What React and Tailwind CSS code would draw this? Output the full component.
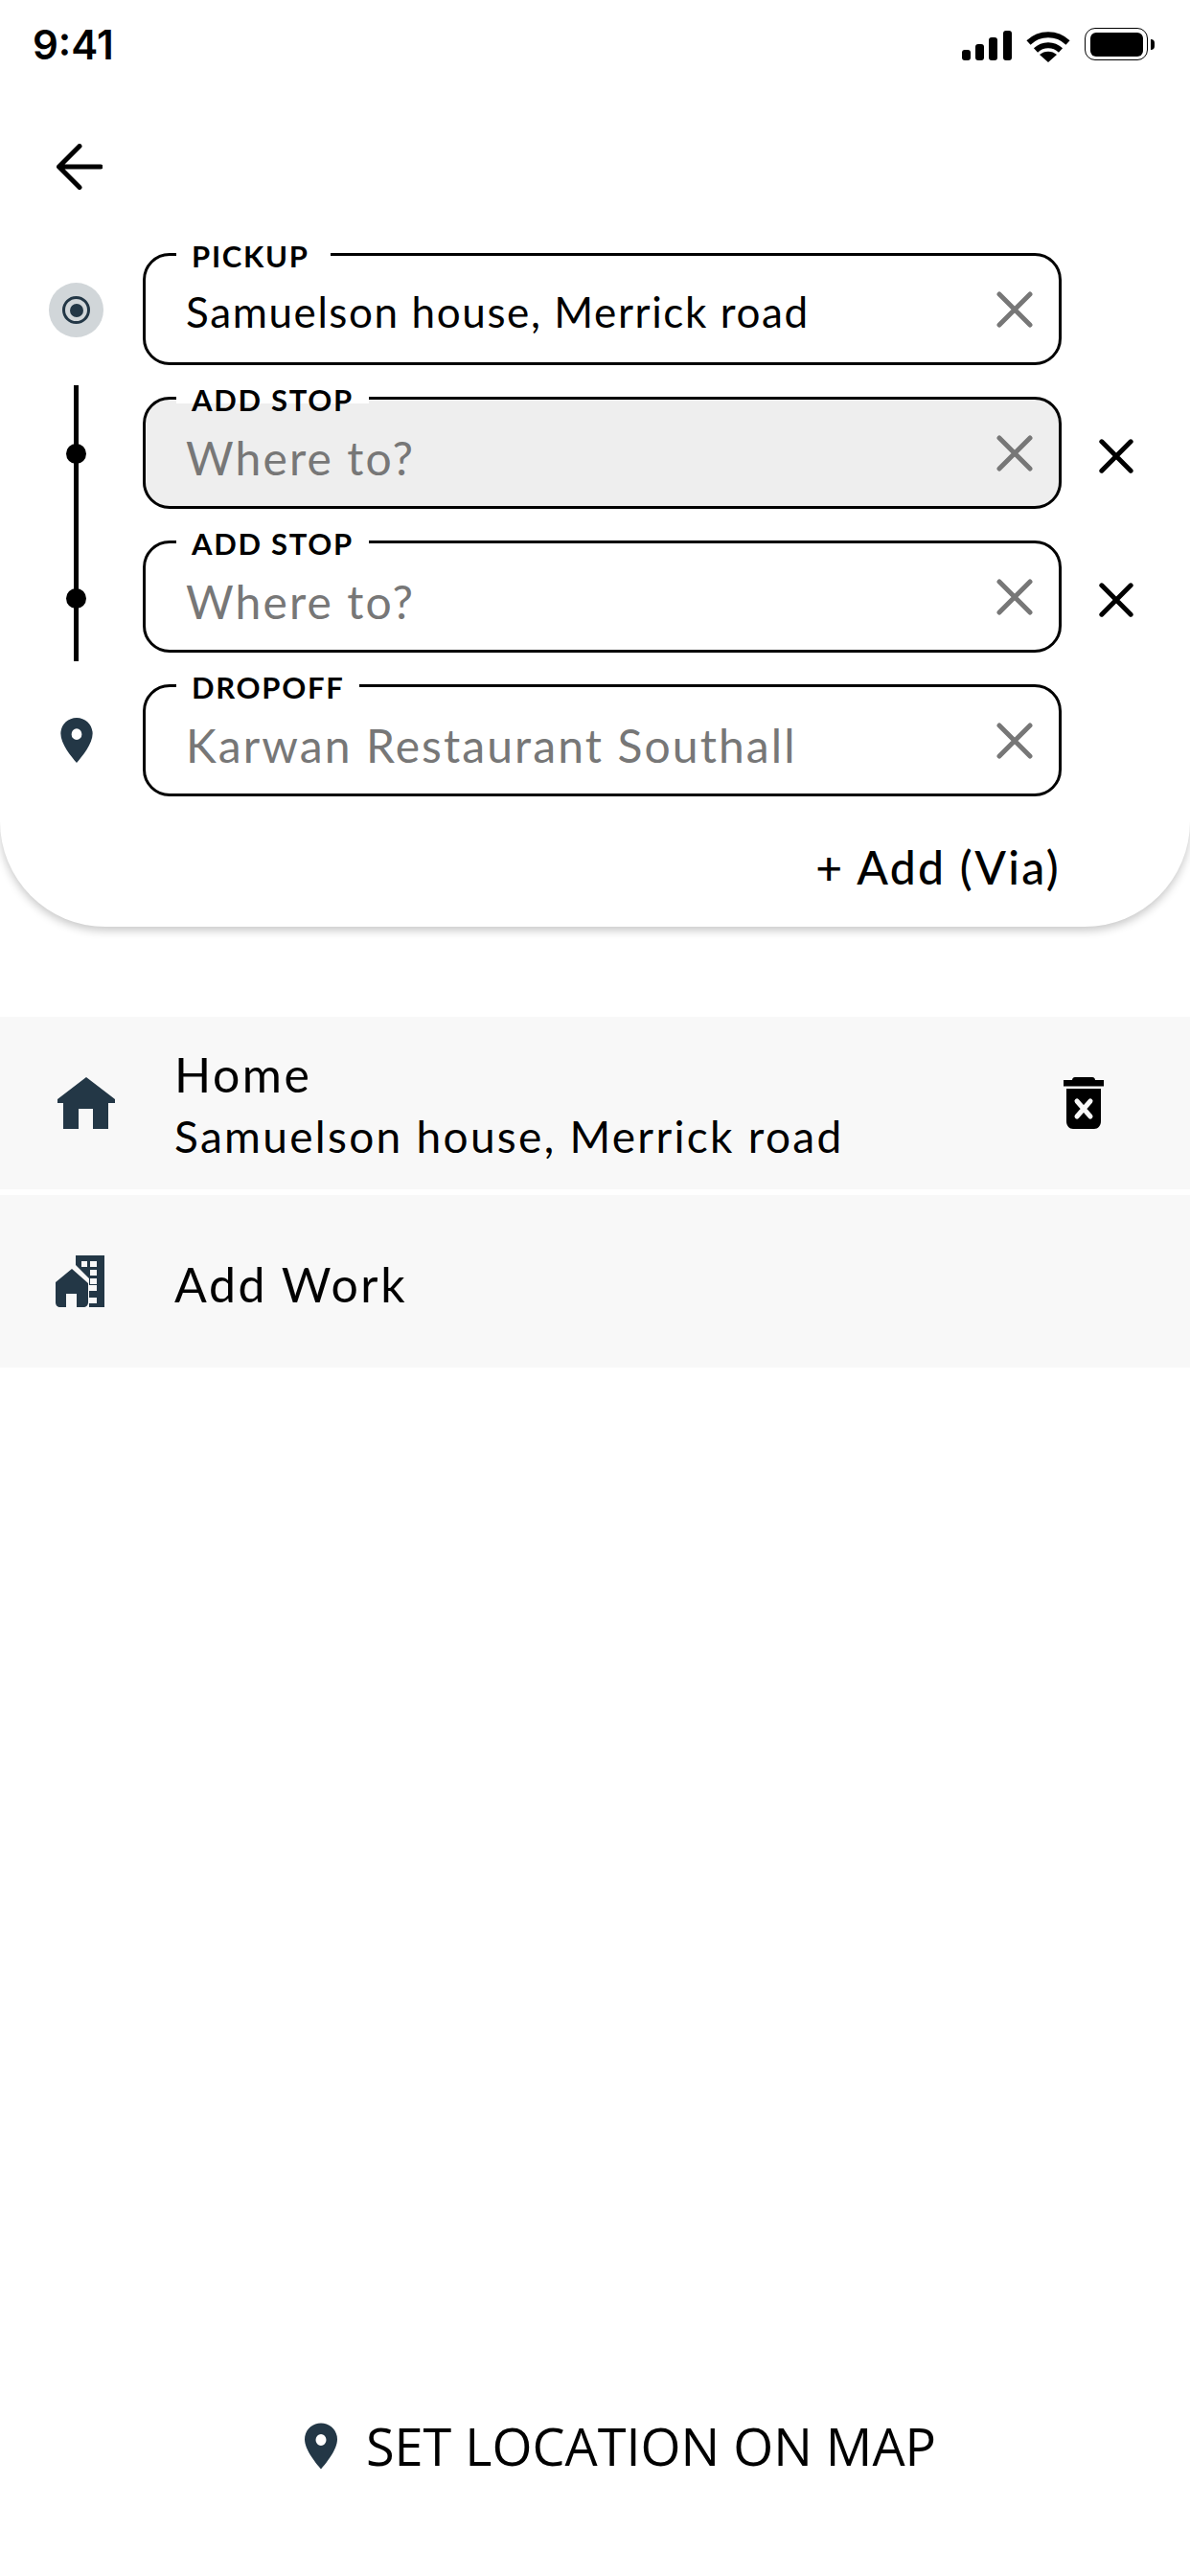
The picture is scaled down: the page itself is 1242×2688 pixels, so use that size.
const DARK = "#233746";

function Close({ color = "#777777", size = 38, sw = 5 }) {
  return (
    <svg width={size} height={size} viewBox="0 0 38 38" className="shrink-0">
      <path d="M3 3L35 35M35 3L3 35" stroke={color} strokeWidth={sw * 38 / size} strokeLinecap="round" />
    </svg>
  );
}

function Pin({ w, h }) {
  return (
    <svg width={w} height={h} viewBox="0 0 34 48" className="shrink-0">
      <path fillRule="evenodd" fill={DARK} d="M17 0C7.6 0 0 7.4 0 16.8 0 27.5 11 41 17 48c6-7 17-20.5 17-31.2C34 7.4 26.4 0 17 0Zm0 11.5a5.5 6 0 1 1 0 12 5.5 6 0 0 1 0-12Z" />
    </svg>
  );
}

function Field({ label, value, muted, filled, removable, labelW, first }) {
  return (
    <div className="flex items-center">
      <div className={`relative flex h-[117px] w-[959px] items-center justify-between rounded-[28px] border-[3px] border-black pl-[42px] pr-[27px] ${filled ? "bg-[#eeeeee]" : "bg-white"}`}>
        <div className={`absolute -top-[10px] left-[32px] h-[14px] bg-white pl-[16px] ${labelW}`}>
          <span className="block -translate-y-[8px] text-[31px] font-bold leading-[36px] tracking-[1.7px] text-black">{label}</span>
        </div>
        <span className={`${first ? "translate-y-[2px] text-[44px] tracking-[1.6px]" : "translate-y-[5px] text-[48px] tracking-[2.1px]"} leading-[52px] ${muted ? "text-[#777777]" : "text-black"}`}>{value}</span>
        <Close />
      </div>
      {removable && (
        <span className="ml-[39px] translate-y-[3px]"><Close color="#000000" size={36} sw={5} /></span>
      )}
    </div>
  );
}

function StatusIcons() {
  return (
    <div className="flex items-start">
      <svg width="52" height="31" viewBox="0 0 52 31" className="mt-[32px]" fill="#000">
        <rect x="0" y="20" width="9" height="11" rx="3" />
        <rect x="14" y="14" width="9" height="17" rx="3" />
        <rect x="28" y="7" width="9" height="24" rx="3" />
        <rect x="43" y="0" width="9" height="31" rx="3" />
      </svg>
      <svg width="46" height="33" viewBox="0 0 46 33" className="ml-[15px] mt-[32px]" fill="none" stroke="#000">
        <path d="M2.5 12.5C14 1.5 32 1.5 43.5 12.5" strokeWidth="6" />
        <path d="M10 20.5C17.5 13.5 28.5 13.5 36 20.5" strokeWidth="6" />
        <path d="M23 33L14 25C19 20.5 27 20.5 32 25Z" fill="#000" stroke="none" />
      </svg>
      <div className="ml-[15px] mt-[29px] flex h-[34px] w-[66px] items-center justify-center rounded-[11px] border-[1.5px] border-black">
        <div className="h-[25px] w-[55px] rounded-[6px] bg-black" />
      </div>
      <div className="ml-[3px] mt-[41px] h-[11px] w-[4px] rounded-r-[4px] bg-black" />
    </div>
  );
}

export default function App() {
  return (
    <div className="flex h-[2688px] w-[1242px] flex-col bg-white font-['Lato',sans-serif] text-black">
      <div className="flex h-[967px] flex-col rounded-b-[110px] bg-white shadow-[0_4px_10px_rgba(0,0,0,0.22)]">
        <div className="flex h-[96px] items-start justify-between pl-[34px] pr-[37px]">
          <span className="mt-[23px] font-['Inter',sans-serif] text-[42px] font-semibold leading-[48px]">9:41</span>
          <StatusIcons />
        </div>
        <div className="ml-[59px] mt-[54px] h-[48px] w-[48px]">
          <svg width="48" height="48" viewBox="0 0 48 48" fill="none" stroke="#000" strokeWidth="5" strokeLinecap="round" strokeLinejoin="round">
            <path d="M46 24H3M24 2.5L2.5 24 24 45.5" />
          </svg>
        </div>
        <div className="mt-[66px] flex">
          <div className="flex w-[149px] shrink-0 flex-col items-center pl-[10px]">
            <div className="mt-[31px] flex h-[57px] w-[57px] items-center justify-center rounded-full bg-[#d1d6d9]">
              <div className="flex h-[29px] w-[29px] items-center justify-center rounded-full border-[3px] border-[#233746]">
                <div className="h-[14px] w-[14px] rounded-full bg-[#233746]" />
              </div>
            </div>
            <div className="relative mt-[50px] h-[288px] w-[5px] bg-black">
              <div className="absolute left-[-8px] top-[61px] h-[21px] w-[21px] rounded-full bg-black" />
              <div className="absolute left-[-8px] top-[212px] h-[21px] w-[21px] rounded-full bg-black" />
            </div>
            <div className="mt-[59px]"><Pin w={34} h={47} /></div>
          </div>
          <div className="flex flex-col gap-[33px]">
            <Field first label="PICKUP" value="Samuelson house, Merrick road" labelW="pr-[22px]" />
            <Field filled removable muted label="ADD STOP" value="Where to?" labelW="pr-[16px]" />
            <Field removable muted label="ADD STOP" value="Where to?" labelW="pr-[16px]" />
            <Field muted label="DROPOFF" value="Karwan Restaurant Southall" labelW="pr-[16px]" />
          </div>
        </div>
        <div className="mt-[46px] w-[1107px] text-right text-[48px] font-medium leading-[56px] tracking-[2.3px]">+ Add (Via)</div>
      </div>

      <div className="mt-[94px] flex flex-col gap-[6px]">
        <div className="flex h-[180px] items-center bg-[#f8f8f8] pl-[60px] pr-[90px]">
          <svg width="60" height="54" viewBox="0 0 60 54" className="shrink-0" fill={DARK}>
            <path fillRule="evenodd" d="M30 0L60 23V27H53V54H6V27H0V23ZM22 33V54H37V33Z" />
          </svg>
          <div className="ml-[62px] flex flex-1 flex-col">
            <span className="translate-y-[1px] text-[50px] leading-[60px] tracking-[2.5px]">Home</span>
            <span className="mt-[9px] text-[46px] leading-[54px] tracking-[2.3px]">Samuelson house, Merrick road</span>
          </div>
          <svg width="42" height="54" viewBox="0 0 42 54" className="shrink-0">
            <path fill="#000" d="M9 3C9 1.5 10 0 12 0H30C32 0 33 1.5 33 3H42V9.500H0V3ZM3 12H39V46C39 50.500 36 54 32 54H10C6 54 3 50.500 3 46Z" />
            <path d="M14 25L28 41M28 25L14 41" stroke="#f8f8f8" strokeWidth="5" strokeLinecap="round" />
          </svg>
        </div>
        <div className="flex h-[180px] items-center bg-[#f8f8f8] pl-[58px]">
          <svg width="52" height="54" viewBox="0 0 52 54" className="shrink-0" fill={DARK}>
            <path fillRule="evenodd" d="M21 0H51V54H35V50H43V44H35V37H43V31H35V24L21 10ZM27 6V12H33V6ZM36 6V12H43V6ZM36 15V21H43V15ZM36 24V30H43V24Z" />
            <path fillRule="evenodd" d="M17 14L34 29V49C34 52 32 54 29 54H5C2 54 0 52 0 49V28ZM11 40V54H22V40Z" />
          </svg>
          <span className="ml-[72px] translate-y-[3px] text-[50px] leading-[60px] tracking-[2.6px]">Add Work</span>
        </div>
      </div>

      <div className="mt-auto mb-[105px] flex items-center justify-center pl-[53px]">
        <Pin w={34} h={49} />
        <span className="ml-[30px] font-['Open_Sans',sans-serif] text-[54px] leading-[62px]">SET LOCATION ON MAP</span>
      </div>
    </div>
  );
}
